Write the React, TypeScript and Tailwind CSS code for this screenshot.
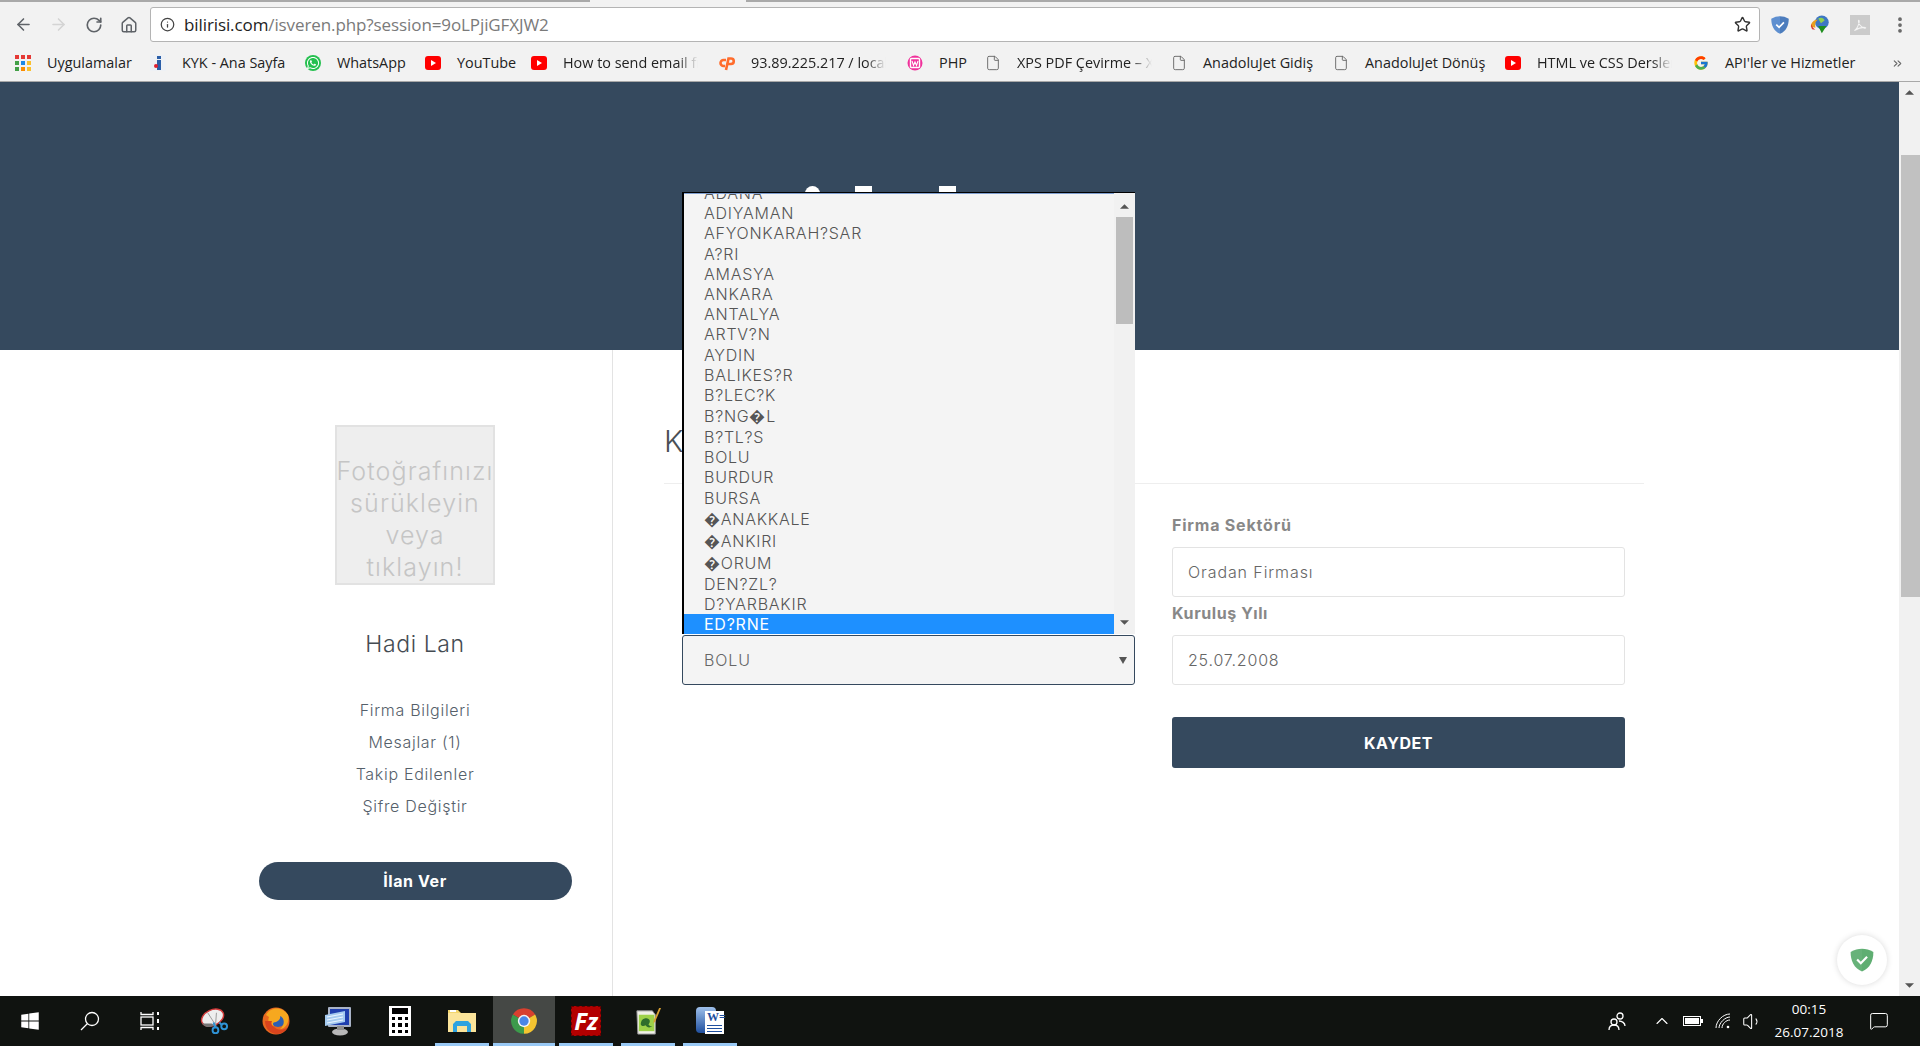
import { ArrowLeft, ArrowRight, RotateCw, Home, Info, Star, EllipsisVertical, ChevronsRight, File, ChevronUp, MessageSquare, Volume1 } from "lucide-react";
import { FaWhatsapp, FaWindows } from "react-icons/fa";
import { FcGoogle } from "react-icons/fc";

const navy = "bg-[#35495e]";

function YouTubeIcon() {
  return (
    <svg viewBox="0 0 16 16" className="w-4 h-4">
      <rect x="0" y="1" width="16" height="14" rx="3" fill="#f00" />
      <path d="M6 5l5 3-5 3z" fill="#fff" />
    </svg>
  );
}

function AppsIcon() {
  const colors = ["#e53935", "#e53935", "#e53935", "#43a047", "#1e88e5", "#fbc02d", "#43a047", "#fb8c00", "#fbc02d"];
  return (
    <div className="grid grid-cols-3 gap-[2px] w-4 h-4">
      {colors.map((c, i) => (
        <span key={i} style={{ backgroundColor: c }} />
      ))}
    </div>
  );
}

function KykIcon() {
  return (
    <svg viewBox="0 0 16 16" className="w-4 h-4">
      <rect x="0" width="16" height="16" fill="#eef1f5" />
      <rect x="7" y="1" width="4" height="3" fill="#2a5ea8" />
      <rect x="7" y="5" width="4" height="10" fill="#2a5ea8" />
      <circle cx="6" cy="11" r="2" fill="#e02030" />
    </svg>
  );
}

function WampIcon() {
  return (
    <svg viewBox="0 0 16 16" className="w-4 h-4">
      <circle cx="8" cy="8" r="7.5" fill="#f0319b" />
      <rect x="3.5" y="3.5" width="9" height="9" rx="1" fill="none" stroke="#fff" strokeWidth="1.4" />
      <path d="M5 6l1.5 4.5L8 7l1.5 3.5L11 6" fill="none" stroke="#fff" strokeWidth="1.1" />
    </svg>
  );
}

function CpanelIcon() {
  return (
    <svg viewBox="0 0 16 16" className="w-4 h-4" fill="none" stroke="#ff6c2c" strokeWidth="2.6">
      <path d="M7 5H4.500a3 3 0 0 0 0 6H6" />
      <path d="M7 15L9.500 3.500h2.500a2.700 2.700 0 0 1 0 5.500H9" />
    </svg>
  );
}

function WhatsAppIcon() {
  return (
    <span className="w-4 h-4 rounded-full bg-[#25c04f] flex items-center justify-center">
      <FaWhatsapp className="w-[14px] h-[14px] text-white" />
    </span>
  );
}

function DocIcon() {
  return <File className="w-4 h-4 text-[#666]" strokeWidth={1.4} />;
}

const bookmarks = [
  { icon: <AppsIcon />, label: "Uygulamalar", cls: "w-[135px]" },
  { icon: <KykIcon />, label: "KYK - Ana Sayfa", cls: "w-[155px]" },
  { icon: <WhatsAppIcon />, label: "WhatsApp", cls: "w-[120px]" },
  { icon: <YouTubeIcon />, label: "YouTube", cls: "w-[106px]" },
  { icon: <YouTubeIcon />, label: "How to send email from", cls: "w-[188px]", fade: true },
  { icon: <CpanelIcon />, label: "93.89.225.217 / localhost", cls: "w-[188px]", fade: true },
  { icon: <WampIcon />, label: "PHP", cls: "w-[78px]" },
  { icon: <DocIcon />, label: "XPS PDF Çevirme – XPS", cls: "w-[186px]", fade: true },
  { icon: <DocIcon />, label: "AnadoluJet Gidiş", cls: "w-[162px]" },
  { icon: <DocIcon />, label: "AnadoluJet Dönüş", cls: "w-[172px]" },
  { icon: <YouTubeIcon />, label: "HTML ve CSS Dersleri", cls: "w-[188px]", fade: true },
  { icon: <FcGoogle className="w-4 h-4" />, label: "API'ler ve Hizmetler", cls: "w-[198px]" },
];

const cities: [string, string][] = [
  ["ADANA", "h-[20px]"],
  ["ADIYAMAN", "h-[20px]"],
  ["AFYONKARAH?SAR", "h-[20px]"],
  ["A?RI", "h-[21px]"],
  ["AMASYA", "h-[20px]"],
  ["ANKARA", "h-[20px]"],
  ["ANTALYA", "h-[20px]"],
  ["ARTV?N", "h-[20px]"],
  ["AYDIN", "h-[21px]"],
  ["BALIKES?R", "h-[20px]"],
  ["B?LEC?K", "h-[20px]"],
  ["B?NG�L", "h-[22px]"],
  ["B?TL?S", "h-[20px]"],
  ["BOLU", "h-[20px]"],
  ["BURDUR", "h-[20px]"],
  ["BURSA", "h-[21px]"],
  ["�ANAKKALE", "h-[22px]"],
  ["�ANKIRI", "h-[22px]"],
  ["�ORUM", "h-[22px]"],
  ["DEN?ZL?", "h-[20px]"],
  ["D?YARBAKIR", "h-[20px]"],
];

function ShieldIcon({ light, dark, className }: { light: string; dark: string; className: string }) {
  return (
    <svg viewBox="0 0 24 24" className={className}>
      <path d="M12 1.5C8.5 1.5 5 2.5 1.5 4.5c0 8 3 15 10.5 18z" fill={light} />
      <path d="M12 1.5c3.5 0 7 1 10.5 3 0 8-3 15-10.5 18z" fill={dark} />
      <path d="M7.5 11.5l3.4 3.4 5.8-6" fill="none" stroke="#fff" strokeWidth="2" />
    </svg>
  );
}

function IdmIcon() {
  return (
    <svg viewBox="0 0 24 24" className="w-[22px] h-[22px]">
      <circle cx="14" cy="9" r="7.5" fill="#3d77c4" />
      <path d="M10 5c3-2 6-1 7 2l-4 3z" fill="#8fd04f" />
      <path d="M2 14c0-5 4-8 8-8-3 2-4 5-3 9z" fill="#e8a020" />
      <path d="M4 17c-2-2-2-4-1-6 0 3 2 5 4 6z" fill="#d9342b" />
      <path d="M10 13h9l-5 8z" fill="#1f8f1f" />
    </svg>
  );
}

function PdfIcon() {
  return (
    <div className="w-5 h-5 bg-[#cbcbcb] flex items-center justify-center">
      <svg viewBox="0 0 20 20" className="w-4 h-4">
        <path d="M3 17c3-2 5-6 6-11 .3-2-.8-2.5-1-1-.2 3 3 8 8 9 1.500 .2 1.500-1 0-1-3-.2-8 1-13 4z" fill="none" stroke="#f4f4f4" strokeWidth="1.300" />
      </svg>
    </div>
  );
}

function SnipIcon() {
  return (
    <svg viewBox="0 0 30 30" className="w-[29px] h-[29px]">
      <ellipse cx="13" cy="11" rx="12" ry="8" transform="rotate(-25 13 11)" fill="#eee" stroke="#d23a3a" strokeWidth="1.500" />
      <path d="M2 17c3 4 8 5 13 2l-3-2z" fill="#777" />
      <path d="M8 6l9 14M17 6l-1 14" stroke="#999" strokeWidth="1" />
      <circle cx="16" cy="24" r="3" fill="none" stroke="#2f93d6" strokeWidth="2" />
      <circle cx="25" cy="20" r="3" fill="none" stroke="#2f93d6" strokeWidth="2" />
      <path d="M14 16l2 6M20 16l3 3" stroke="#2f93d6" strokeWidth="2" />
    </svg>
  );
}

function FirefoxIcon() {
  return (
    <svg viewBox="0 0 28 28" className="w-7 h-7">
      <circle cx="14" cy="14" r="13.500" fill="#e8681f" />
      <circle cx="16" cy="11" r="9" fill="#2c5fb3" />
      <path d="M4 8c4-8 16-9 22 0 2 8-3 14-8 14 5-4 5-11 0-13 1 3-2 5-4 6-3 0-4 2-2 4-4 0-7-4-5-9z" fill="#f6a81f" />
      <path d="M3 14c0 8 6 13 12 13 5 0 9-3 11-7-5 4-11 3-14 0-3-2-3-4-2-6z" fill="#d9441d" />
    </svg>
  );
}

function OskIcon() {
  return (
    <svg viewBox="0 0 30 30" className="w-[30px] h-[30px]">
      <rect x="5" y="1" width="23" height="20" rx="1" fill="#a9b3c7" />
      <rect x="7" y="3" width="19" height="16" fill="#1f3fae" />
      <path d="M2 9l20-4v11L2 20z" fill="#a5cbf0" />
      <path d="M4 11l16-3M4 14l16-3M4 17l16-3" stroke="#eaf4ff" strokeWidth="1.200" />
      <ellipse cx="17" cy="26" rx="8" ry="3.500" fill="#b8b8b8" />
      <rect x="14" y="20" width="7" height="4" fill="#8f8f8f" />
    </svg>
  );
}

function CalcIcon() {
  return (
    <div className="w-[22px] h-[30px] bg-white flex flex-col p-[2px] gap-[2px]">
      <span className="h-[6px] bg-black mx-[1px]" />
      <div className="grid grid-cols-3 gap-x-[3px] gap-y-[3px] flex-1 px-[1px] py-[1px]">
        {[0, 1, 2, 3, 4, 5, 6, 7, 8].map((i) => (
          <span key={i} className="bg-black" />
        ))}
      </div>
    </div>
  );
}

function FolderIcon() {
  return (
    <svg viewBox="0 0 28 26" className="w-7 h-[26px]">
      <path d="M0 2h10l3 3h15v19H0z" fill="#f3d56e" />
      <rect x="0" y="5" width="28" height="19" fill="#fbe49a" />
      <rect x="2" y="2" width="6" height="2" fill="#fff" />
      <path d="M5 24v-8l3-3h12l3 3v8h-4v-6H9v6z" fill="#2ea3e0" />
    </svg>
  );
}

function ChromeIcon() {
  return (
    <svg viewBox="0 0 24 24" className="w-7 h-7">
      <path d="M12 12L2.470 6.500A11 11 0 0 1 21.530 6.500z" fill="#d8402f" />
      <path d="M12 12l9.530-5.500A11 11 0 0 1 12 23z" fill="#f4c430" />
      <path d="M12 12v11A11 11 0 0 1 2.470 6.500z" fill="#3c9a4b" />
      <circle cx="12" cy="12" r="5.300" fill="#f4f4f4" />
      <circle cx="12" cy="12" r="4" fill="#4a86e8" />
    </svg>
  );
}

function NotepadIcon() {
  return (
    <svg viewBox="0 0 30 30" className="w-[29px] h-[29px]">
      <path d="M3 4h16l3 4v20H4z" fill="#f0f0e8" stroke="#999" />
      <rect x="5" y="8" width="16" height="17" fill="#9ed24a" />
      <path d="M7 18c0-5 4-7 7-6 3 1 3 4 1 6 1 2 3 2 4 2-3 2-6 1-7-1-2 1-4 1-5-1z" fill="#2f6e2c" />
      <path d="M28 1l-6 14-2 2 .5-3.500L26 1z" fill="#d8a032" />
    </svg>
  );
}

function WordIcon() {
  return (
    <div className="relative w-7 h-7">
      <div className="absolute left-0 top-0 w-5 h-[26px] bg-gradient-to-b from-[#9fc0ea] to-[#1f4f9e] rounded-sm" />
      <div className="absolute left-[9px] top-[4px] w-[19px] h-[23px] bg-white flex flex-col px-[2px]">
        <span className="text-[12px] leading-[13px] font-bold text-[#1f4f9e] font-['Liberation_Serif',serif]">W=</span>
        <span className="h-[1px] bg-[#1f4f9e] mt-[1px]" />
        <span className="h-[1px] bg-[#1f4f9e] mt-[2px]" />
        <span className="h-[1px] bg-[#1f4f9e] mt-[2px]" />
      </div>
    </div>
  );
}

function TaskButton({ children, state }: { children: React.ReactNode; state?: "open" | "active" }) {
  return (
    <div className={"relative w-[62px] h-full flex items-center justify-center " + (state === "active" ? "bg-[#454845]" : "")}>
      {children}
      {state && (
        <span className={"absolute bottom-0 h-[3px] bg-[#99c9f5] " + (state === "active" ? "inset-x-0" : "inset-x-[4px]")} />
      )}
    </div>
  );
}

export default function App() {
  return (
    <div className="w-[1920px] h-[1046px] flex flex-col overflow-hidden bg-white font-['Inter',sans-serif]">

      {/* TOOLBAR */}
      <div className="h-[82px] shrink-0 bg-[#f2f2f2] border-b border-[#a8a8a8] flex flex-col font-['Open_Sans',sans-serif]">
        <div className="h-[2px] flex">
          <div className="w-[590px] bg-[#a9a9a9]" />
          <div className="w-[156px]" />
          <div className="flex-1 bg-[#a9a9a9]" />
        </div>
        <div className="flex items-center h-[35px] mt-[5px] pl-[6px]">
          <div className="w-[35px] flex justify-center"><ArrowLeft className="w-[19px] h-[19px] text-[#5f6368]" strokeWidth={2} /></div>
          <div className="w-[35px] flex justify-center"><ArrowRight className="w-[19px] h-[19px] text-[#d4d4d4]" strokeWidth={2} /></div>
          <div className="w-[35px] flex justify-center"><RotateCw className="w-[18px] h-[18px] text-[#5f6368]" strokeWidth={2.2} /></div>
          <div className="w-[35px] flex justify-center"><Home className="w-[18px] h-[18px] text-[#5f6368]" strokeWidth={2} /></div>
          <div className="ml-[4px] w-[1610px] h-[35px] bg-white border border-[#b4b4b4] rounded-[3px] flex items-center pl-[9px] pr-[8px]">
            <Info className="w-[15px] h-[15px] text-[#444]" strokeWidth={2} />
            <span className="ml-[9px] text-[17px] tracking-[-0.1px]">
              <span className="text-[#222]">bilirisi.com</span>
              <span className="text-[#7a7a7a]">/isveren.php?session=9oLPjiGFXJW2</span>
            </span>
            <Star className="ml-auto w-[17px] h-[17px] text-[#333]" strokeWidth={2} />
          </div>
          <div className="w-10 flex justify-center"><ShieldIcon light="#5e8fd0" dark="#4d7dbd" className="w-5 h-5" /></div>
          <div className="w-10 flex justify-center"><IdmIcon /></div>
          <div className="w-10 flex justify-center"><PdfIcon /></div>
          <div className="w-10 flex justify-center"><EllipsisVertical className="w-5 h-5 text-[#666]" strokeWidth={2.500} /></div>
        </div>
        <div className="flex items-center h-[32px] mt-[5px] pl-[15px] text-[14.4px] text-[#222] relative">
          {bookmarks.map((b, i) => (
            <div key={i} className={"flex items-center gap-4 shrink-0 " + b.cls}>
              {b.icon}
              <span className={b.fade ? "w-[135px] overflow-hidden whitespace-nowrap [mask-image:linear-gradient(to_right,black_85%,transparent)]" : "whitespace-nowrap"}>
                {b.label}
              </span>
            </div>
          ))}
          <ChevronsRight className="w-[13px] h-[13px] text-[#666]" />
        </div>
      </div>

      {/* PAGE */}
      <div className="relative flex-1 flex min-h-0">
        <div className="flex-1 flex flex-col min-w-0">
          <div className={"relative h-[268px] shrink-0 " + navy}>
            <span className="absolute left-[805px] top-[104px] w-[15px] h-[8px] rounded-t-full bg-white" />
            <span className="absolute left-[855px] top-[104px] w-[17px] h-[8px] bg-white" />
            <span className="absolute left-[939px] top-[104px] w-[17px] h-[8px] bg-white" />
          </div>

          <div className="flex-1 flex min-h-0">
            {/* SIDEBAR */}
            <aside className="w-[613px] border-r border-[#e3e3e3] flex flex-col items-center pt-[75px] pl-[218px]">
              <div className="w-[160px] h-[160px] bg-[#eeeeee] border-2 border-[#e2e2e2] flex items-end justify-center text-center text-[25px] leading-[32px] text-[#c5c5c5] font-light tracking-[1.1px] whitespace-nowrap">
                <div>Fotoğrafınızı<br />sürükleyin<br />veya<br />tıklayın!</div>
              </div>
              <h2 className="mt-[43px] text-[23px] leading-[32px] font-light text-[#444b52] tracking-[0.6px]">Hadi Lan</h2>
              <nav className="mt-[34px] flex flex-col items-center text-[16px] leading-[32px] font-light text-[#55606a] tracking-[0.7px]">
                <a href="#">Firma Bilgileri</a>
                <a href="#">Mesajlar (1)</a>
                <a href="#">Takip Edilenler</a>
                <a href="#">Şifre Değiştir</a>
              </nav>
              <button className={"mt-[40px] w-[313px] h-[38px] rounded-full text-white text-[16px] font-bold tracking-[0.6px] " + navy}>
                İlan Ver
              </button>
            </aside>

            {/* FORM */}
            <main className="pl-[51px]">
              <div className="w-[980px] h-[134px] border-b border-[#eeeeee] pt-[72px]">
                <h1 className="text-[30px] leading-[38px] font-light text-[#4a4f55]">K</h1>
              </div>
              <div className="flex pl-[18px] gap-[37px]">
                <div className="w-[453px] pt-[151px]">
                  <div className="h-[50px] bg-[#f4f4f4] border border-[#35495e] rounded-[3px] flex items-center justify-between pl-[21px] pr-[7px] text-[16px] text-[#666] font-light tracking-[0.9px]">
                    BOLU
                    <svg viewBox="0 0 8 8" className="w-2 h-2"><path d="M0 1h8L4 8z" fill="#555" /></svg>
                  </div>
                </div>
                <div className="w-[453px] pt-[29px]">
                  <label className="block h-[24px] mb-[10px] text-[16px] leading-[24px] font-bold text-[#888] tracking-[0.8px]">Firma Sektörü</label>
                  <input readOnly value="Oradan Firması" className="block w-full h-[50px] border border-[#e3e3e3] rounded-[3px] px-[15px] text-[16px] font-light text-[#666] tracking-[0.9px]" />
                  <label className="block h-[32px] mb-[6px] text-[16px] leading-[32px] font-bold text-[#888] tracking-[0.6px]">Kuruluş Yılı</label>
                  <input readOnly value="25.07.2008" className="block w-full h-[50px] border border-[#e3e3e3] rounded-[3px] px-[15px] text-[16px] font-light text-[#666] tracking-[0.8px]" />
                  <button className={"mt-[32px] w-full h-[51px] rounded-[3px] text-white text-[16px] font-bold tracking-[0.5px] " + navy}>KAYDET</button>
                </div>
              </div>
            </main>
          </div>
        </div>

        {/* PAGE SCROLLBAR */}
        <div className="w-[21px] shrink-0 bg-[#f1f1f1] flex flex-col items-center justify-between relative py-[8px]">
          <svg viewBox="0 0 10 5" className="w-[9px] h-[5px]"><path d="M5 0l5 5H0z" fill="#555" /></svg>
          <svg viewBox="0 0 10 5" className="w-[9px] h-[5px]"><path d="M5 5L0 0h10z" fill="#555" /></svg>
          <span className="absolute top-[73px] left-[2px] right-[0px] h-[442px] bg-[#c1c1c1]" />
        </div>

        {/* OPEN SELECT LIST */}
        <div className="absolute left-[682px] top-[110px] w-[453px] h-[442px] border-l-2 border-t border-black flex bg-[#f4f4f4] text-[16px] font-light text-[#555] tracking-[0.75px]">
          <ul className="flex-1 flex flex-col justify-end overflow-hidden border-t border-[#7f9fd0]">
            {cities.map(([name, h]) => (
              <li key={name} className={"shrink-0 pl-[20px] flex items-center " + h}>{name}</li>
            ))}
            <li className="shrink-0 h-[20px] pl-[20px] flex items-center bg-[#1e90ff] text-white font-normal">ED?RNE</li>
          </ul>
          <div className="w-[21px] bg-[#f1f1f1] relative flex flex-col items-center justify-between pt-[11px] pb-[9px]">
            <svg viewBox="0 0 10 5" className="w-[9px] h-[5px]"><path d="M5 0l5 5H0z" fill="#555" /></svg>
            <svg viewBox="0 0 10 5" className="w-[9px] h-[5px]"><path d="M5 5L0 0h10z" fill="#555" /></svg>
            <span className="absolute top-[24px] left-[2px] right-[2px] h-[107px] bg-[#bdbdbd]" />
          </div>
        </div>

        {/* ADGUARD BADGE */}
        <div className="absolute right-[33px] bottom-[11px] w-[50px] h-[50px] rounded-full bg-white shadow-[0_0_6px_rgba(0,0,0,0.15)] flex items-center justify-center">
          <ShieldIcon light="#67b279" dark="#5fae72" className="w-[26px] h-[26px]" />
        </div>
      </div>

      {/* TASKBAR */}
      <div className="h-[50px] shrink-0 bg-[#101310] flex items-center text-white font-['Open_Sans',sans-serif]">
        <div className="w-[60px] flex justify-center"><FaWindows className="w-[20px] h-[20px]" /></div>
        <div className="w-[60px] flex justify-center">
          <svg viewBox="0 0 20 20" className="w-5 h-5" fill="none" stroke="#fff" strokeWidth="1.300"><circle cx="12" cy="8" r="6.500" /><path d="M7.500 12.500L1 19" /></svg>
        </div>
        <div className="w-[60px] flex justify-center">
          <svg viewBox="0 0 20 20" className="w-5 h-[22px]" fill="none" stroke="#fff" strokeWidth="1.300">
            <path d="M1 1v2.500h12V1M1 19v-2.500h12V19" /><rect x="1" y="6" width="12" height="8" /><path d="M18 1v3M18 8v4M18 16v3" strokeWidth="2" />
          </svg>
        </div>
        <div className="w-[3px]" />
        <div className="flex h-full">
          <TaskButton><SnipIcon /></TaskButton>
          <TaskButton><FirefoxIcon /></TaskButton>
          <TaskButton><OskIcon /></TaskButton>
          <TaskButton><CalcIcon /></TaskButton>
          <TaskButton state="open"><FolderIcon /></TaskButton>
          <TaskButton state="active"><ChromeIcon /></TaskButton>
          <TaskButton state="open">
            <div className="w-[30px] h-[30px] bg-[#b30000] border border-dashed border-[#600] flex items-center justify-center text-[24px] font-bold italic leading-none">Fz</div>
          </TaskButton>
          <TaskButton state="open"><NotepadIcon /></TaskButton>
          <TaskButton state="open"><WordIcon /></TaskButton>
        </div>

        {/* TRAY */}
        <div className="ml-auto flex items-center h-full">
          <svg viewBox="0 0 20 20" className="w-5 h-5 mr-[25px]" fill="none" stroke="#fff" strokeWidth="1.300">
            <circle cx="7" cy="11" r="3" /><circle cx="13" cy="5" r="3" /><path d="M2 19c0-3 2-5 5-5s5 2 5 5M12 10c3 0 6 2 6 5" />
          </svg>
          <ChevronUp className="w-[20px] h-[20px] mr-[11px]" strokeWidth={1.300} />
          <div className="w-[18px] h-[10px] border border-white p-[1px] mr-[14px] relative">
            <div className="h-full w-full bg-white" />
            <span className="absolute -right-[3px] top-[2px] w-[2px] h-[4px] bg-white" />
          </div>
          <svg viewBox="0 0 16 16" className="w-4 h-4 mr-[11px]" fill="none" stroke="#fff" strokeWidth="1">
            <path d="M1 15C1 8 8 1 15 1M4 15c0-5 6-11 11-11M7 15c0-4 4-8 8-8" /><circle cx="13" cy="14" r="1.300" fill="#fff" stroke="none" />
          </svg>
          <Volume1 className="w-[21px] h-[21px] mr-[10px]" strokeWidth={1.200} />
          <div className="w-[72px] text-center text-[13.5px] leading-[23px] whitespace-nowrap">
            <div>00:15</div>
            <div>26.07.2018</div>
          </div>
          <MessageSquare className="ml-[24px] mr-[31px] w-[20px] h-[20px]" strokeWidth={1.200} />
        </div>
      </div>
    </div>
  );
}
